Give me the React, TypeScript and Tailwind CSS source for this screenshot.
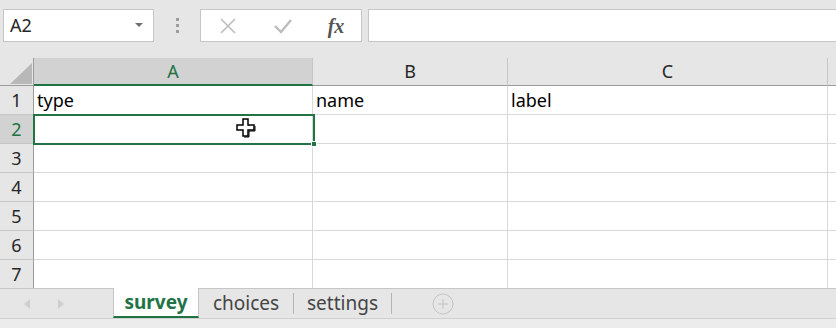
import React from "react";

const font = { fontFamily: '"Noto Sans", "Open Sans", Arial, sans-serif' };

function Row({ n, selected, children }: { n: number; selected?: boolean; children?: React.ReactNode[] }) {
  const cells = children ?? [null, null, null];
  return (
    <div className="flex h-[29px] shrink-0">
      <div
        className={
          "w-[34px] shrink-0 flex items-center justify-center text-[18px] border-r border-b " +
          (selected
            ? "bg-[#d2d2d2] text-[#217346] border-r-[#9b9b9b] border-b-[#c6c6c6]"
            : "bg-[#e6e6e6] text-[#262626] border-r-[#9b9b9b] border-b-[#c6c6c6]")
        }
      >
        {n}
      </div>
      <div className="w-[279px] shrink-0 bg-white border-r border-b border-[#d9d9d9] pl-[3px] pt-[2px] text-[18px] text-black leading-[25px]">
        {cells[0]}
      </div>
      <div className="w-[195px] shrink-0 bg-white border-r border-b border-[#d9d9d9] pl-[3px] pt-[2px] text-[18px] text-black leading-[25px]">
        {cells[1]}
      </div>
      <div className="w-[320px] shrink-0 bg-white border-r border-b border-[#d9d9d9] pl-[3px] pt-[2px] text-[18px] text-black leading-[25px]">
        {cells[2]}
      </div>
      <div className="flex-1 bg-white border-b border-[#d9d9d9]" />
    </div>
  );
}

export default function App() {
  return (
    <div className="w-[836px] h-[328px] overflow-hidden bg-[#e6e6e6] flex flex-col relative" style={font}>
      {/* toolbar */}
      <div className="h-[58px] shrink-0 flex items-start pt-[9px]">
        <div className="ml-[3px] w-[151px] h-[33px] bg-white border border-[#c6c6c6] flex items-center pl-[6px] pr-[10px] text-[18px] text-[#262626]">
          <span className="flex-1">A2</span>
          <svg width="8" height="5" viewBox="0 0 8 5">
            <path d="M0 0 L8 0 L4 4 Z" fill="#6f6f6f" />
          </svg>
        </div>
        <div className="w-[46px] h-[33px] flex flex-col items-center justify-center gap-[3px]">
          <div className="w-[3px] h-[3px] bg-[#9d9d9d]" />
          <div className="w-[3px] h-[3px] bg-[#9d9d9d]" />
          <div className="w-[3px] h-[3px] bg-[#9d9d9d]" />
        </div>
        <div className="w-[162px] h-[33px] bg-white border border-[#c6c6c6] flex items-center">
          <div className="w-[54px] flex justify-center">
            <svg width="18" height="18" viewBox="0 0 18 18">
              <path d="M2 2 L16 16 M16 2 L2 16" stroke="#bdbdbd" strokeWidth="1.6" />
            </svg>
          </div>
          <div className="w-[56px] flex justify-center">
            <svg width="20" height="18" viewBox="0 0 20 18">
              <path d="M2 9 L8 15 L18 3" stroke="#bdbdbd" strokeWidth="2.4" fill="none" />
            </svg>
          </div>
          <div className="w-[50px] flex justify-center">
            <span
              className="text-[20px] italic font-bold text-[#555]"
              style={{ fontFamily: '"Liberation Serif", "DejaVu Serif", serif' }}
            >
              fx
            </span>
          </div>
        </div>
        <div className="ml-[6px] flex-1 h-[33px] bg-white border border-[#c6c6c6] border-r-0" />
      </div>

      {/* column headers */}
      <div className="flex h-[28px] shrink-0">
        <div className="w-[34px] shrink-0 bg-[#e6e6e6] border-r border-b border-[#9b9b9b] relative">
          <svg className="absolute left-[10px] top-[5px]" width="22" height="21" viewBox="0 0 22 21">
            <path d="M22 0 L22 21 L0 21 Z" fill="#b8b8b8" />
          </svg>
        </div>
        <div className="w-[279px] shrink-0 bg-[#d2d2d2] border-r border-[#c6c6c6] border-b-2 border-b-[#217346] flex items-center justify-center text-[18px] text-[#217346]">
          A
        </div>
        <div className="w-[195px] shrink-0 bg-[#e6e6e6] border-r border-[#c6c6c6] border-b border-b-[#9b9b9b] flex items-center justify-center text-[18px] text-[#262626]">
          B
        </div>
        <div className="w-[320px] shrink-0 bg-[#e6e6e6] border-r border-[#c6c6c6] border-b border-b-[#9b9b9b] flex items-center justify-center text-[18px] text-[#262626]">
          C
        </div>
        <div className="flex-1 bg-[#e6e6e6] border-b border-b-[#9b9b9b]" />
      </div>

      {/* rows */}
      <div className="relative flex flex-col h-[202px] shrink-0 overflow-hidden">
        <Row n={1}>{["type", "name", "label"]}</Row>
        <Row n={2} selected />
        <Row n={3} />
        <Row n={4} />
        <Row n={5} />
        <Row n={6} />
        <Row n={7} />
        {/* selection */}
        <div className="absolute left-[33px] top-[28px] w-[282px] h-[31px] border-2 border-[#217346]" />
        <div className="absolute left-[311px] top-[55px] w-[6px] h-[6px] bg-[#217346] border border-white" />
        {/* cursor */}
        <svg className="absolute left-[236px] top-[32px]" width="20" height="20" viewBox="0 0 20 20">
          <path
            d="M7 1 H12 V7 H18 V12 H12 V18 H7 V12 H1 V7 H7 Z"
            fill="white"
            stroke="black"
            strokeWidth="1.5"
          />
          <path d="M13 8 V7 M8 19 H13 V13 H19 V8" stroke="black" strokeWidth="1" fill="none" />
        </svg>
      </div>

      {/* sheet tabs */}
      <div className="h-[30px] shrink-0 flex items-stretch border-t border-[#c6c6c6] text-[19px]">
        <div className="w-[113px] shrink-0 flex items-center">
          <svg className="ml-[24px]" width="7" height="10" viewBox="0 0 7 10">
            <path d="M6 0 L0 5 L6 10 Z" fill="#cfcfcf" />
          </svg>
          <svg className="ml-[26px]" width="7" height="10" viewBox="0 0 7 10">
            <path d="M1 0 L7 5 L1 10 Z" fill="#cfcfcf" />
          </svg>
        </div>
        <div className="w-[86px] shrink-0 bg-white border-x border-[#c6c6c6] border-b-2 border-b-[#217346] -mt-px flex items-center justify-center font-bold text-[#217346]">
          survey
        </div>
        <div className="w-[94px] shrink-0 flex items-center justify-center text-[#444]">choices</div>
        <div className="w-px my-[4px] bg-[#b4b4b4]" />
        <div className="w-[97px] shrink-0 flex items-center justify-center text-[#444]">settings</div>
        <div className="w-px my-[4px] bg-[#b4b4b4]" />
        <div className="w-[40px]" />
        <div className="flex items-center">
          <svg width="22" height="22" viewBox="0 0 22 22">
            <circle cx="11" cy="11" r="10" fill="none" stroke="#c4c4c4" strokeWidth="1" />
            <path d="M11 6 V16 M6 11 H16" stroke="#c4c4c4" strokeWidth="1" />
          </svg>
        </div>
      </div>
      <div className="flex-1 border-t border-[#d0d0d0] bg-[#ececec]" />
    </div>
  );
}
